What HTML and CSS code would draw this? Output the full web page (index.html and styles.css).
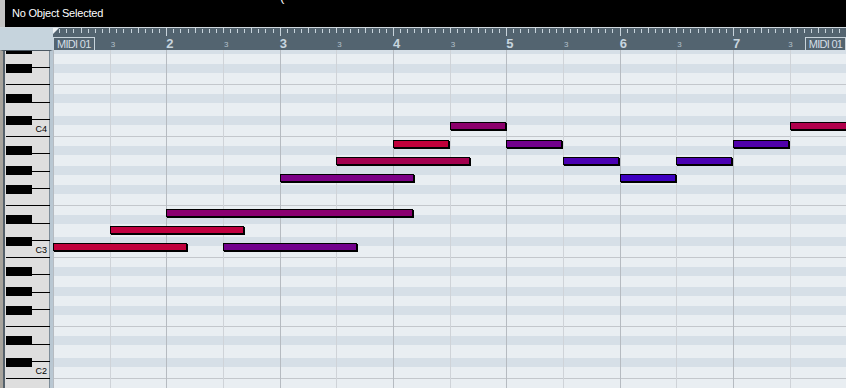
FILE: index.html
```html
<!DOCTYPE html>
<html lang="en">
<head>
    <meta charset="UTF-8">
    <title>Key Editor</title>
    <link rel="stylesheet" href="styles.css">
</head>
<body>
<div class="window">

    <div class="infobar">
        <span class="status">No Object Selected</span>
        <span class="cut">(</span>
    </div>

    <div class="ruler-row">
        <div class="corner"></div>
        <div class="ruler">
            <div class="bar">
                <div class="ticks"><i class="locator"></i><i></i><i></i><i></i><i></i><i></i><i></i><i></i><i></i><i></i><i></i><i></i><i></i><i></i><i></i><i></i></div>
                <div class="nums"><span class="cell"><span class="part">MIDI 01</span></span><span class="cell"><span class="sub">3</span></span></div>
            </div>
            <div class="bar">
                <div class="ticks"><i></i><i></i><i></i><i></i><i></i><i></i><i></i><i></i><i></i><i></i><i></i><i></i><i></i><i></i><i></i><i></i></div>
                <div class="nums"><span class="cell"><span class="num">2</span></span><span class="cell"><span class="sub">3</span></span></div>
            </div>
            <div class="bar">
                <div class="ticks"><i></i><i></i><i></i><i></i><i></i><i></i><i></i><i></i><i></i><i></i><i></i><i></i><i></i><i></i><i></i><i></i></div>
                <div class="nums"><span class="cell"><span class="num">3</span></span><span class="cell"><span class="sub">3</span></span></div>
            </div>
            <div class="bar">
                <div class="ticks"><i></i><i></i><i></i><i></i><i></i><i></i><i></i><i></i><i></i><i></i><i></i><i></i><i></i><i></i><i></i><i></i></div>
                <div class="nums"><span class="cell"><span class="num">4</span></span><span class="cell"><span class="sub">3</span></span></div>
            </div>
            <div class="bar">
                <div class="ticks"><i></i><i></i><i></i><i></i><i></i><i></i><i></i><i></i><i></i><i></i><i></i><i></i><i></i><i></i><i></i><i></i></div>
                <div class="nums"><span class="cell"><span class="num">5</span></span><span class="cell"><span class="sub">3</span></span></div>
            </div>
            <div class="bar">
                <div class="ticks"><i></i><i></i><i></i><i></i><i></i><i></i><i></i><i></i><i></i><i></i><i></i><i></i><i></i><i></i><i></i><i></i></div>
                <div class="nums"><span class="cell"><span class="num">6</span></span><span class="cell"><span class="sub">3</span></span></div>
            </div>
            <div class="bar">
                <div class="ticks"><i></i><i></i><i></i><i></i><i></i><i></i><i></i><i></i><i></i><i></i><i></i><i></i><i></i><i></i><i></i><i></i></div>
                <div class="nums"><span class="cell"><span class="num">7</span></span><span class="cell"><span class="sub">3</span><span class="part next">MIDI 01</span></span></div>
            </div>
        </div>
    </div>

    <div class="editor">
        <div class="keyboard">
            <div class="octave"><span>C4</span></div>
            <div class="octave"><span>C3</span></div>
            <div class="octave"><span>C2</span></div>
            <div class="octave"></div>
        </div>

        <div class="grid">
            <!-- left/top/width come from note start, pitch and length; colour from velocity -->
            <div class="note" style="left:0;top:193px;width:134px;background:#c0003c"></div>
            <div class="note" style="left:57px;top:176px;width:134px;background:#c0003f"></div>
            <div class="note" style="left:113px;top:159px;width:247px;background:#8a0070"></div>
            <div class="note" style="left:170px;top:193px;width:134px;background:#72008c"></div>
            <div class="note" style="left:227px;top:124px;width:134px;background:#7c0086"></div>
            <div class="note" style="left:283px;top:107px;width:134px;background:#a2004e"></div>
            <div class="note" style="left:340px;top:90px;width:56px;background:#c0003a"></div>
            <div class="note" style="left:397px;top:72px;width:56px;background:#8c006c"></div>
            <div class="note" style="left:453px;top:90px;width:56px;background:#72008c"></div>
            <div class="note" style="left:510px;top:107px;width:56px;background:#4a00b2"></div>
            <div class="note" style="left:567px;top:124px;width:56px;background:#3e00c0"></div>
            <div class="note" style="left:623px;top:107px;width:56px;background:#4a00b2"></div>
            <div class="note" style="left:680px;top:90px;width:56px;background:#5000aa"></div>
            <div class="note" style="left:737px;top:72px;width:60px;background:#b0004c"></div>
        </div>
    </div>

</div>
</body>
</html>
```

FILE: styles.css
```css
* {
    box-sizing: border-box;
}

body {
    margin: 0;
    background-color: #c4c4c4;
    font-family: "Liberation Sans", Arial, sans-serif;
}

.window {
    width: 846px;
    height: 388px;
    overflow: hidden;
}

/* top info line */
.infobar {
    position: relative;
    height: 27px;
    margin-left: 5px;
    background-color: #000;
    color: #fff;
}

.status {
    display: block;
    padding: 7px 0 0 7px;
    font-size: 11px;
    line-height: 13px;
    letter-spacing: -0.2px;
}

.cut {
    position: absolute;
    left: 275px;
    top: -10px;
    font-size: 13px;
    line-height: 13px;
}

/* ruler */
.ruler-row {
    display: flex;
    height: 23px;
    border-top: 1px solid #cfd7dd;
}

.corner {
    width: 53px;
    background-color: #c6d4dd;
}

.ruler {
    flex: 1;
    display: flex;
    overflow: hidden;
    background-color: #536470;
}

.bar {
    flex: 0 0 113.333px;
    display: flex;
    flex-direction: column;
}

.ticks {
    position: relative;
    display: flex;
    height: 8px;
}

.ticks i {
    flex: 1;
    height: 4px;
    margin-top: 1px;
    border-left: 1px solid #c8d4dc;
}

.ticks i:nth-child(4n+1) {
    height: 5px;
    margin-top: 0;
}

.ticks i:first-child {
    height: 8px;
}

/* left locator triangle */
.ticks .locator {
    border-left: none;
}

.locator::before {
    content: "";
    display: block;
    width: 0;
    height: 0;
    border-top: 6px solid #eef2f5;
    border-right: 6px solid transparent;
}

.nums {
    flex: 1;
    display: grid;
    grid-template-columns: 1fr 1fr;
}

.cell {
    display: flex;
    align-items: flex-end;
}

.num {
    font-size: 13px;
    line-height: 13px;
    font-weight: bold;
    color: #c7d5df;
}

.sub {
    font-size: 8px;
    line-height: 10px;
    padding-left: 1px;
    color: #b3c1cb;
}

.part {
    height: 13px;
    padding: 0 3px;
    border: 1px solid #c8d4dc;
    border-bottom: none;
    font-size: 11px;
    line-height: 12px;
    letter-spacing: -0.7px;
    color: #d3dee6;
    white-space: nowrap;
}

.part.next {
    margin-left: 12px;
}

/* piano roll */
.editor {
    display: flex;
    height: 338px;
}

.keyboard {
    width: 53px;
    overflow: hidden;
    border-top: 1px solid #4c5862;
    border-left: 3px solid #a8a49d;
    border-right: 3px solid #b9c7d2;
    background-color: #dedede;
    box-shadow: inset 2px 0 0 #55616b, inset -1px 0 0 #7d8c98;
}

.octave {
    height: 121px;
    display: flex;
    justify-content: flex-end;
    align-items: flex-end;
    padding: 0 3px 2px 0;
    background-image:
        linear-gradient(#000, #000),
        linear-gradient(#000, #000),
        linear-gradient(to bottom, transparent 10px, #000 10px 19px, transparent 19px 30px, #000 30px 39px, transparent 39px 49px, #000 49px 58px, transparent 58px 79px, #000 79px 88px, transparent 88px 101px, #000 101px 110px, transparent 110px),
        linear-gradient(to bottom, transparent 17px, #000 17px 18px, transparent 18px 35px, #000 35px 36px, transparent 36px 52px, #000 52px 53px, transparent 53px 87px, #000 87px 88px, transparent 88px 104px, #000 104px 105px, transparent 105px);
    background-size: 44px 1px, 44px 1px, 26px 121px, 18px 121px;
    background-position: 3px 0, 3px 69px, 3px 0, 29px 0;
    background-repeat: no-repeat;
}

.octave:first-child {
    margin-top: -36px;
}

.octave span {
    font-size: 9px;
    line-height: 9px;
    color: #000;
}

.grid {
    position: relative;
    flex: 1;
    overflow: hidden;
    background-color: #e9eef2;
    background-image:
        linear-gradient(90deg, #b6bbc1 0 1px, transparent 1px 57px, #cfd3d8 57px 58px, transparent 58px 113px, #b6bbc1 113px 114px, transparent 114px 170px, #cfd3d8 170px 171px, transparent 171px 227px, #b6bbc1 227px 228px, transparent 228px 283px, #cfd3d8 283px 284px, transparent 284px),
        linear-gradient(to bottom, #c3c7cc 0 1px, transparent 1px 69px, #c3c7cc 69px 70px, transparent 70px),
        linear-gradient(to bottom, transparent 10px, #d6dfe7 10px 19px, transparent 19px 30px, #d6dfe7 30px 39px, transparent 39px 49px, #d6dfe7 49px 58px, transparent 58px 79px, #d6dfe7 79px 88px, transparent 88px 101px, #d6dfe7 101px 110px, transparent 110px);
    background-size: 340px 100%, 100% 121px, 100% 121px;
    background-position: 0 0, 0 -35px, 0 -35px;
    background-repeat: repeat-x, repeat-y, repeat-y;
}

.note {
    position: absolute;
    height: 8px;
    border: 1px solid #000;
    box-shadow: 1px 1px 0 #000;
}
```
